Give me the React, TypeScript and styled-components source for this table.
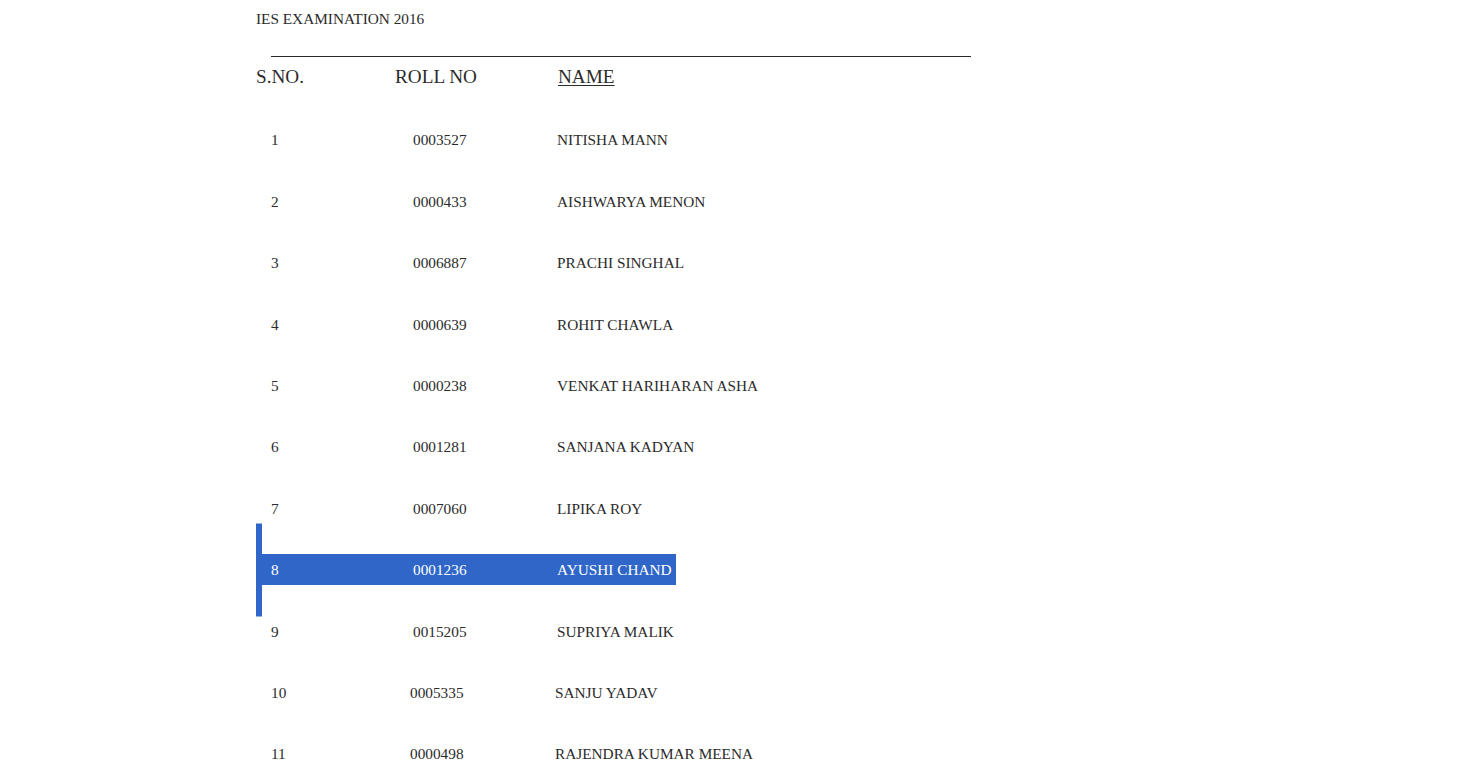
import { FC } from 'react';
import styled, { createGlobalStyle } from 'styled-components';

const results = [
  { sno: 1, roll: '0003527', name: 'NITISHA MANN' },
  { sno: 2, roll: '0000433', name: 'AISHWARYA MENON' },
  { sno: 3, roll: '0006887', name: 'PRACHI SINGHAL' },
  { sno: 4, roll: '0000639', name: 'ROHIT CHAWLA' },
  { sno: 5, roll: '0000238', name: 'VENKAT HARIHARAN ASHA' },
  { sno: 6, roll: '0001281', name: 'SANJANA KADYAN' },
  { sno: 7, roll: '0007060', name: 'LIPIKA ROY' },
  { sno: 8, roll: '0001236', name: 'AYUSHI CHAND' },
  { sno: 9, roll: '0015205', name: 'SUPRIYA MALIK' },
  { sno: 10, roll: '0005335', name: 'SANJU YADAV' },
  { sno: 11, roll: '0000498', name: 'RAJENDRA KUMAR MEENA' },
];

const SELECTED = 8;

const App: FC = () => {
  return (
    <>
      <GlobalStyle />
      <Page>
        <Title>IES EXAMINATION 2016</Title>
        <Rule />
        <Header>
          <HeadCell>S.NO.</HeadCell>
          <HeadCell>ROLL NO</HeadCell>
          <HeadCell $underline>NAME</HeadCell>
        </Header>
        <List>
          {results.map((r) => {
            const selected = r.sno === SELECTED;
            const wide = r.sno >= 10;
            return (
              <Row key={r.sno} $selected={selected}>
                <Line $selected={selected}>
                  <Cell>{r.sno}</Cell>
                  <Cell $shift={wide ? -3 : 0}>{r.roll}</Cell>
                  <Cell $shift={wide ? -2 : 0}>{r.name}</Cell>
                </Line>
              </Row>
            );
          })}
        </List>
      </Page>
    </>
  );
};

const GlobalStyle = createGlobalStyle`
  html, body {
    margin: 0;
    padding: 0;
    background: #fff;
  }

  body {
    font-family: 'Liberation Serif', 'Times New Roman', serif;
    color: #2b2b2b;
  }
`;

const Page = styled.div`
  width: 1464px;
  height: 784px;
  overflow: hidden;
  box-sizing: border-box;
  padding: 10px 0 0 256px;
`;

const Title = styled.h1`
  margin: 0;
  font-size: 15.3px;
  font-weight: normal;
  line-height: 18px;
`;

const Rule = styled.hr`
  margin: 28px 0 0 15px;
  width: 700px;
  border: 0;
  border-top: 1px solid #2a2a2a;
  height: 0;
`;

const Header = styled.div`
  display: grid;
  grid-template-columns: 139px 163px auto;
  margin-top: 9px;
  font-size: 19.2px;
  line-height: 22px;
`;

const HeadCell = styled.span<{ $underline?: boolean }>`
  white-space: nowrap;
  text-decoration: ${(p) => (p.$underline ? 'underline' : 'none')};
  text-underline-offset: 2px;
  text-decoration-thickness: 1px;
`;

const List = styled.div`
  margin-top: 21.3px;
`;

const Row = styled.div<{ $selected?: boolean }>`
  position: relative;
  height: 61.4px;
  display: flex;
  align-items: center;

  &::before {
    content: '';
    display: ${(p) => (p.$selected ? 'block' : 'none')};
    position: absolute;
    left: 0;
    top: 50%;
    width: 6px;
    height: 93px;
    transform: translateY(-50%);
    background: #2f66c8;
  }
`;

const Line = styled.div<{ $selected?: boolean }>`
  display: grid;
  grid-template-columns: 142px 144px auto;
  width: max-content;
  font-size: 15.3px;
  line-height: 31px;
  margin-left: ${(p) => (p.$selected ? '6px' : '0')};
  padding: ${(p) => (p.$selected ? '0 4px 0 9px' : '0 0 0 15px')};
  background: ${(p) => (p.$selected ? '#2f66c8' : 'transparent')};
  color: ${(p) => (p.$selected ? '#fff' : 'inherit')};
`;

const Cell = styled.span<{ $shift?: number }>`
  white-space: nowrap;
  margin-left: ${(p) => p.$shift ?? 0}px;
`;

export default App;
